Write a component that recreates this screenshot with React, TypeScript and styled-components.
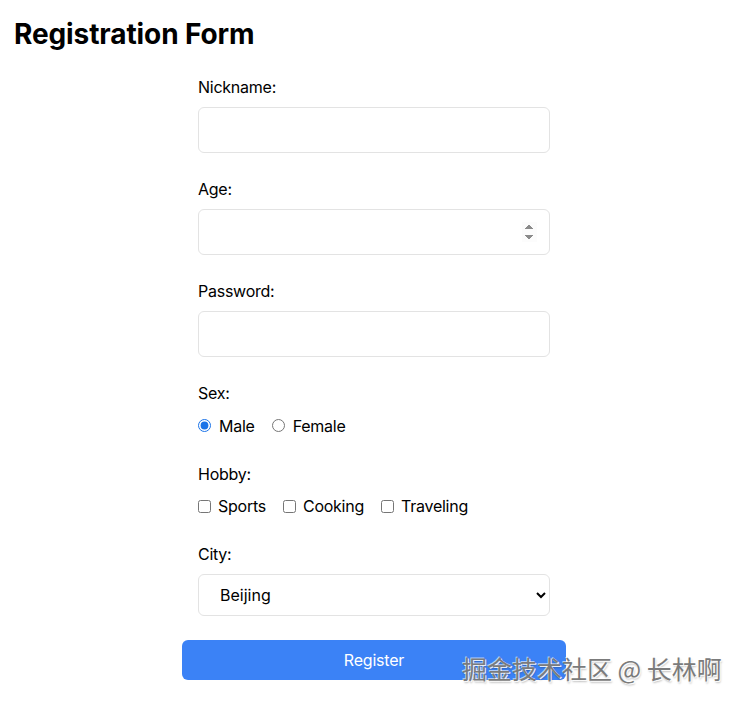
import React from 'react';
import styled, { createGlobalStyle } from 'styled-components';

const GlobalStyle = createGlobalStyle`
  body {
    margin: 0;
    font-family: Inter, "Noto Sans", "Liberation Sans", sans-serif;
    color: #000;
    background: #fff;
  }
`;

const Page = styled.div`
  position: relative;
  width: 744px;
  min-height: 704px;
  box-sizing: border-box;
  padding: 17px 10px 0 14px;
`;

const Title = styled.h1`
  margin: 0;
  font-size: 28px;
  line-height: 34px;
  font-weight: 700;
  letter-spacing: -0.1px;
`;

const Form = styled.form`
  width: 384px;
  margin: 24px auto 0;
  display: flex;
  flex-direction: column;
  gap: 24px;
`;

const Field = styled.div`
  display: flex;
  flex-direction: column;
  gap: 8px;
  padding: 0 16px;
`;

const Label = styled.label`
  font-size: 16px;
  line-height: 24px;
  letter-spacing: -0.25px;
`;

const TextInput = styled.input`
  height: 46px;
  box-sizing: border-box;
  border: 1px solid #e3e3e3;
  border-radius: 6px;
  padding: 0 12px;
  font: inherit;
  font-size: 16px;
  outline: none;

  &::-webkit-inner-spin-button {
    opacity: 1;
  }
`;

const OptionRow = styled.div<{ $height?: number }>`
  display: flex;
  align-items: center;
  gap: 17px;
  height: ${(p) => p.$height ?? 24}px;
`;

const Option = styled.label<{ $gap?: number }>`
  display: flex;
  align-items: center;
  gap: ${(p) => p.$gap ?? 8}px;
  font-size: 16px;
  line-height: 24px;
  letter-spacing: -0.25px;

  input {
    margin: 0;
    width: 13px;
    height: 13px;
    accent-color: #1a73e8;
  }
`;

const Select = styled.select`
  height: 42px;
  box-sizing: border-box;
  border: 1px solid #e3e3e3;
  border-radius: 6px;
  padding: 0 6px 0 17px;
  background: #fff;
  font: inherit;
  font-size: 16px;
  color: #000;
  outline: none;
`;

const Button = styled.button`
  height: 40px;
  border: none;
  border-radius: 6px;
  background: #3b82f6;
  color: #fff;
  font: inherit;
  font-size: 16px;
  letter-spacing: -0.2px;
  cursor: pointer;
`;

const Watermark = styled.div`
  position: absolute;
  left: 462px;
  top: 651px;
  font-family: "Noto Sans CJK SC", "Noto Sans", sans-serif;
  font-size: 25px;
  line-height: 34px;
  color: #7b7b7b;
  text-shadow: 1px 1px 0 rgba(255, 255, 255, 0.9), -1px -1px 0 rgba(255, 255, 255, 0.6),
    1px 2px 2px rgba(0, 0, 0, 0.25);
  pointer-events: none;
  white-space: nowrap;
`;

export default function App() {
  return (
    <Page>
      <GlobalStyle />
      <Title>Registration Form</Title>
      <Form onSubmit={(e) => e.preventDefault()}>
        <Field>
          <Label htmlFor="nickname">Nickname:</Label>
          <TextInput id="nickname" type="text" />
        </Field>
        <Field>
          <Label htmlFor="age">Age:</Label>
          <TextInput id="age" type="number" />
        </Field>
        <Field>
          <Label htmlFor="password">Password:</Label>
          <TextInput id="password" type="password" />
        </Field>
        <Field>
          <Label>Sex:</Label>
          <OptionRow $height={25}>
            <Option>
              <input type="radio" name="sex" defaultChecked /> Male
            </Option>
            <Option>
              <input type="radio" name="sex" /> Female
            </Option>
          </OptionRow>
        </Field>
        <Field>
          <Label>Hobby:</Label>
          <OptionRow>
            <Option $gap={7}>
              <input type="checkbox" /> Sports
            </Option>
            <Option $gap={7}>
              <input type="checkbox" /> Cooking
            </Option>
            <Option $gap={7}>
              <input type="checkbox" /> Traveling
            </Option>
          </OptionRow>
        </Field>
        <Field>
          <Label htmlFor="city">City:</Label>
          <Select id="city" defaultValue="beijing">
            <option value="beijing">Beijing</option>
            <option value="shanghai">Shanghai</option>
            <option value="guangzhou">Guangzhou</option>
          </Select>
        </Field>
        <Button type="submit">Register</Button>
      </Form>
      <Watermark>掘金技术社区 @ 长林啊</Watermark>
    </Page>
  );
}
